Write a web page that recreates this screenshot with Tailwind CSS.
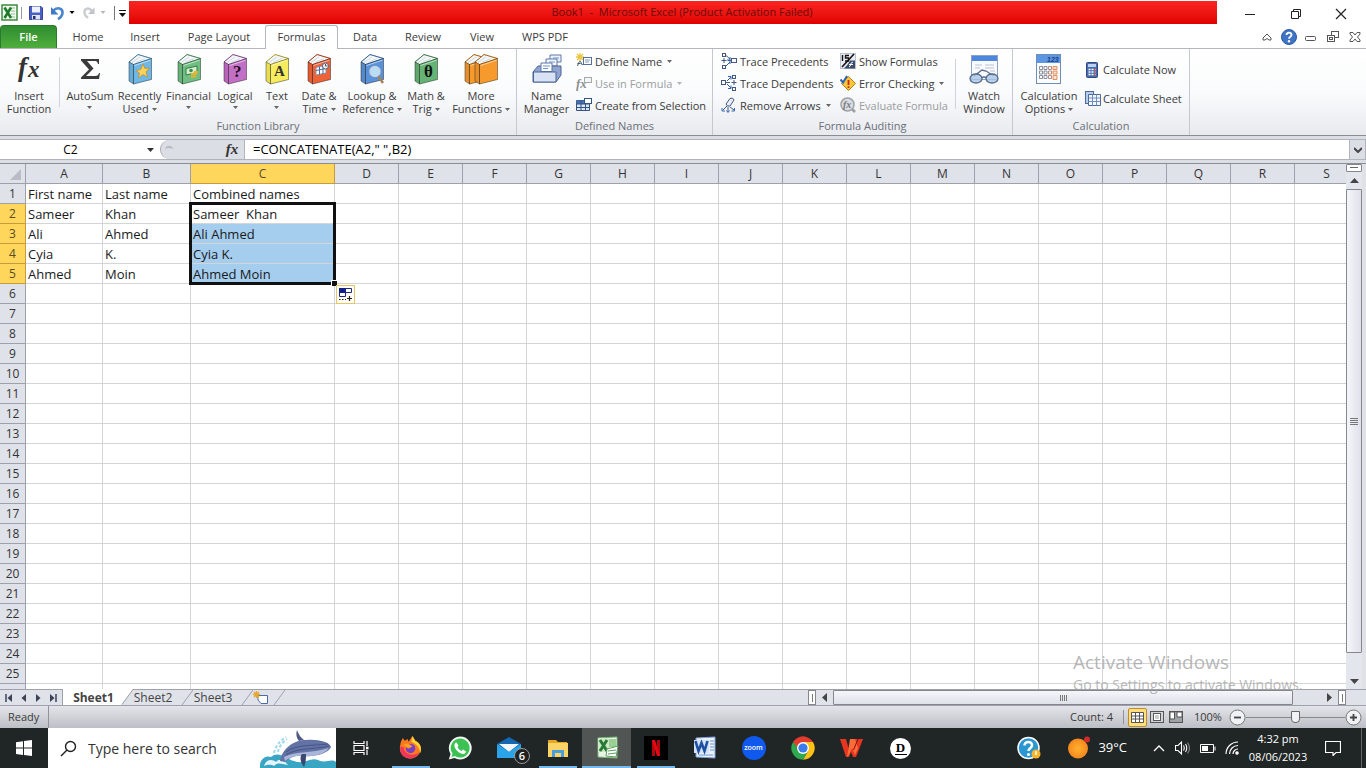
<!DOCTYPE html>
<html lang="en">
<head>
<meta charset="utf-8">
<title>Book1 - Microsoft Excel</title>
<script src="https://cdn.jsdelivr.net/npm/@tailwindcss/browser@4"></script>
</head>
<body class="relative flex h-screen flex-col overflow-hidden bg-white font-['Open_Sans','Noto_Sans',sans-serif] text-[11px] text-[#3b3b3b]">

<svg class="hidden">
  <symbol id="book" viewBox="0 0 32 32">
    <path d="M5 9L14 1.500L27.500 5.500L9.500 11.500Z" fill="#f4f7fa" stroke="currentColor" stroke-width="1"/>
    <path d="M5 9L14 1.500L27.500 5.500" fill="none" stroke="#0005" stroke-width="1"/>
    <path d="M8 9.500L16 4M12 9.500L21 5.500" stroke="#c9d1d8" stroke-width=".8" fill="none"/>
    <path d="M9.500 11.500L27.500 5.500V26.500L9.500 31Z" fill="currentColor" stroke="#0006" stroke-width="1"/>
    <path d="M5 9L9.500 11.500V31L5 28Z" fill="currentColor" stroke="#0006" stroke-width="1"/>
    <path d="M5.500 10L9 12V30L5.500 27.500Z" fill="#0001"/>
    <path d="M10.500 12.500L26.500 7.200" stroke="#fff8" fill="none"/>
  </symbol>
  <symbol id="caret" viewBox="0 0 5 3"><path d="M0 0H5L2.500 3Z" fill="currentColor"/></symbol>
</svg>

<!-- Title bar -->
<header class="flex h-[25px] shrink-0 items-center">
  <div class="flex w-[129px] shrink-0 items-center">
    <svg class="ml-px h-[18px] w-[17px]" viewBox="0 0 17 18"><rect x="1" y="1" width="15" height="15" fill="#f3faf1" stroke="#3d8b3d" stroke-width="1.500"/><path d="M10 4h4M10 7h4M10 10h4M10 13h4" stroke="#8cc28c"/><path d="M3.500 3.500L10 14M10 3.500L3.500 14" stroke="#1f7a2b" stroke-width="2.600"/></svg>
    <span class="ml-[3px] h-3 w-px bg-[#9a9a9a]"></span>
    <button aria-label="Save" class="ml-[6px]"><svg class="size-4" viewBox="0 0 16 16"><path d="M1.500 1.500H13l1.500 1.500V14.500H1.500Z" fill="#4a5fc4" stroke="#33459c"/><rect x="4" y="1.500" width="8" height="6" fill="#eef1fb"/><rect x="4" y="10" width="8" height="4.500" fill="#dfe3ee"/><rect x="5" y="11" width="2.500" height="3" fill="#222e6e"/></svg></button>
    <button aria-label="Undo" class="ml-[6px]"><svg class="size-4" viewBox="0 0 16 16"><path d="M3 6C7 1.500 13 3 12.500 8C12.200 11 10 13 8 14" fill="none" stroke="#4a86cf" stroke-width="2.600"/><path d="M1 2V9.500H8.500Z" fill="#3f7ac6"/></svg></button>
    <svg class="ml-[3px] h-[3px] w-[6px] text-black"><use href="#caret"/></svg>
    <button aria-label="Redo" class="ml-[6px]"><svg class="size-4" viewBox="0 0 16 16"><path d="M11 6C8 2 3 3 3.500 8C4 11 6 12 7 13" fill="none" stroke="#c9ccd1" stroke-width="2.400"/><path d="M13.500 2.500V9H7Z" fill="#bfc3c9"/></svg></button>
    <svg class="ml-[3px] h-[3px] w-[6px] text-[#b9b9b9]"><use href="#caret"/></svg>
    <span class="ml-2 h-3.5 w-px bg-[#777]"></span>
    <button aria-label="Customize toolbar" class="ml-1"><svg class="h-2 w-[7px]" viewBox="0 0 7 8"><path d="M0 1.500H7" stroke="#111"/><path d="M0 4H7L3.500 8Z" fill="#111"/></svg></button>
  </div>
  <h1 class="flex h-[23px] flex-1 items-center justify-center whitespace-pre bg-linear-to-b from-[#fb2420] to-[#e00000] pl-[18px] text-[#6b0d0a]">Book1  -  Microsoft Excel (Product Activation Failed)</h1>
  <div class="flex w-[149px] shrink-0 justify-end pt-0.5 pr-[2px] text-[#222]">
    <button aria-label="Minimize" class="flex w-[46px] justify-center"><svg class="size-3" viewBox="0 0 12 12"><path d="M1 6.500H11" stroke="currentColor"/></svg></button>
    <button aria-label="Restore" class="flex w-[45px] justify-center"><svg class="size-3" viewBox="0 0 12 12" fill="none" stroke="currentColor"><path d="M1.500 3.500H8.500V10.500H1.500ZM3.500 3V1.500H10.500V8.500H9"/></svg></button>
    <button aria-label="Close" class="flex w-[46px] justify-center"><svg class="size-3" viewBox="0 0 12 12"><path d="M1 1L11 11M11 1L1 11" stroke="currentColor" stroke-width="1.200"/></svg></button>
  </div>
</header>

<!-- Ribbon tabs -->
<nav class="flex h-6 shrink-0 border-b border-[#b3b6ba]">
  <button class="mr-[2px] w-[57px] rounded-t-[4px] border border-b-0 border-[#2b7a2b] bg-linear-to-b from-[#2f8d31] to-[#4fae3c] font-semibold text-white">File</button>
  <button class="w-[58px] pt-px">Home</button>
  <button class="w-[56px] pt-px">Insert</button>
  <button class="w-[92px] pt-px">Page Layout</button>
  <button class="h-6 w-[73px] rounded-t-[3px] border border-b-0 border-[#b3b6ba] bg-white">Formulas</button>
  <button class="w-[54px] pt-px">Data</button>
  <button class="w-[62px] pt-px">Review</button>
  <button class="w-[56px] pt-px">View</button>
  <button class="w-[70px] pt-px">WPS PDF</button>
  <div class="ml-auto flex text-[#555]">
    <button aria-label="Collapse ribbon" class="flex w-[22px] items-center justify-center"><svg class="h-2 w-2.5" viewBox="0 0 10 8"><path d="M1 5L5 1L9 5V7H7L5 5.500L3 7H1Z" fill="#fff" stroke="currentColor"/></svg></button>
    <button aria-label="Help" class="flex w-[22px] items-center justify-center"><svg class="size-4" viewBox="0 0 16 16"><circle cx="8" cy="8" r="7.500" fill="#3f74c4" stroke="#2b5aa6"/><path d="M5.500 6C5.500 2.800 10.700 3 10.500 6C10.400 7.700 8 7.800 8 9.800" fill="none" stroke="#fff" stroke-width="1.800"/><circle cx="8" cy="12.200" r="1.200" fill="#fff"/></svg></button>
    <button aria-label="Minimize workbook" class="flex w-[22px] items-center justify-center"><svg class="h-3 w-3" viewBox="0 0 12 12"><rect x=".5" y="5.500" width="10" height="4" rx="1" fill="#fff" stroke="currentColor"/></svg></button>
    <button aria-label="Restore workbook" class="flex w-[22px] items-center justify-center"><svg class="h-3 w-3" viewBox="0 0 12 12" fill="#fff" stroke="currentColor"><rect x="4.500" y=".5" width="7" height="6"/><rect x=".5" y="4.500" width="7" height="6"/><rect x="2.500" y="6.500" width="3" height="2"/></svg></button>
    <button aria-label="Close workbook" class="flex w-[22px] items-center justify-center"><svg class="h-2.5 w-3" viewBox="0 0 12 10"><path d="M1 .5H4L6 3L8 .5H11V2L8.500 5L11 8V9.500H8L6 7L4 9.500H1V8L3.500 5L1 2Z" fill="#fff" stroke="currentColor"/></svg></button>
  </div>
</nav>

<!-- Ribbon -->
<section class="flex h-[87px] shrink-0 border-b border-[#8b8d94] bg-linear-to-b from-white via-[#fafbfc] to-[#e8eaee] leading-[13px]">
  <div class="flex w-[517px] shrink-0 flex-col border-r border-[#c5c8cd]">
    <div class="flex flex-1 items-start pt-1">
      <button class="flex w-[58px] flex-col items-center gap-1"><svg class="size-8" viewBox="0 0 32 32"><text x="5" y="23" font-family="Liberation Serif, serif" font-style="italic" font-weight="700" font-size="27" fill="#333">f</text><text x="15" y="24" font-family="Liberation Serif, serif" font-style="italic" font-weight="700" font-size="23" fill="#333">x</text></svg><span>Insert<br>Function</span></button>
      <span class="mt-1 mr-[5px] ml-px h-[50px] w-px bg-[#d0d3d8]"></span>
      <button class="flex w-[50px] flex-col items-center gap-1"><svg class="size-8" viewBox="0 0 32 32"><path d="M7 6H25V11H24C23.500 8.500 22.500 8 20 8H13L19.500 15.500L12 23H21C23.500 23 24.500 22 25 20H26L25 26H7V24.500L15 16.500L7 7.500Z" fill="#3a3a3a"/></svg><span class="flex flex-col items-center">AutoSum<svg class="mt-[4px] h-[3px] w-[5px] text-[#666]"><use href="#caret"/></svg></span></button>
      <button class="flex w-[49px] flex-col items-center gap-1"><svg class="size-8 text-[#6db8e6]" viewBox="0 0 32 32"><use href="#book"/><path d="M19 11L20.800 15.500L25.500 15L22 19L23.500 24L19 21.500L14.500 25L15.500 20L12 17.500L16.800 16.500Z" fill="#ffd25a" stroke="#c58a1e" stroke-width=".7"/></svg><span class="whitespace-nowrap">Recently<br>Used <svg class="mb-[2px] inline h-[3px] w-[5px] text-[#666]"><use href="#caret"/></svg></span></button>
      <button class="flex w-[49px] flex-col items-center gap-1"><svg class="size-8 text-[#6fbf82]" viewBox="0 0 32 32"><use href="#book"/><path d="M13 15.500L24 13V19.500L13 22Z" fill="#d5efd0" stroke="#2f7a45"/><circle cx="18" cy="17.500" r="1.800" fill="#398a4d"/><path d="M18 21h6M18 23.500h5M21 19h4" stroke="#e5b52e" stroke-width="2"/></svg><span class="flex flex-col items-center">Financial<svg class="mt-[4px] h-[3px] w-[5px] text-[#666]"><use href="#caret"/></svg></span></button>
      <button class="flex w-[44px] flex-col items-center gap-1"><svg class="size-8 text-[#c46fc6]" viewBox="0 0 32 32"><use href="#book"/><text x="14" y="24" font-family="Liberation Serif, serif" font-weight="700" font-size="17" fill="#1c0f20">?</text></svg><span class="flex flex-col items-center">Logical<svg class="mt-[4px] h-[3px] w-[5px] text-[#666]"><use href="#caret"/></svg></span></button>
      <button class="flex w-[40px] flex-col items-center gap-1"><svg class="size-8 text-[#f7ec5c]" viewBox="0 0 32 32"><use href="#book"/><text x="13" y="23" font-family="Liberation Serif, serif" font-weight="700" font-size="15" fill="#333">A</text></svg><span class="flex flex-col items-center">Text<svg class="mt-[4px] h-[3px] w-[5px] text-[#666]"><use href="#caret"/></svg></span></button>
      <button class="flex w-[44px] flex-col items-center gap-1"><svg class="size-8 text-[#ee6238]" viewBox="0 0 32 32"><use href="#book"/><path d="M13 14.500L23 12V20L13 22Z" fill="#fff" stroke="#8794a8"/><path d="M13 17.500l10-2M16.500 13.500v8M20 13v8" stroke="#4d6aa0"/><circle cx="22.500" cy="13" r="3" fill="#eef2f8" stroke="#56657d"/><path d="M22.500 11v2h2" stroke="#333" fill="none" stroke-width=".8"/></svg><span class="whitespace-nowrap">Date &amp;<br>Time <svg class="mb-[2px] inline h-[3px] w-[5px] text-[#666]"><use href="#caret"/></svg></span></button>
      <button class="flex w-[62px] flex-col items-center gap-1"><svg class="size-8 text-[#5a92d8]" viewBox="0 0 32 32"><use href="#book"/><path d="M22 23L27 30" stroke="#a1825c" stroke-width="2.500"/><circle cx="19" cy="18.500" r="5" fill="#b9dcf7" stroke="#c9d3df" stroke-width="1.500"/></svg><span class="whitespace-nowrap">Lookup &amp;<br>Reference <svg class="mb-[2px] inline h-[3px] w-[5px] text-[#666]"><use href="#caret"/></svg></span></button>
      <button class="flex w-[46px] flex-col items-center gap-1"><svg class="size-8 text-[#65b476]" viewBox="0 0 32 32"><use href="#book"/><text x="14" y="24" font-family="Liberation Serif, serif" font-weight="700" font-size="17" fill="#111">θ</text></svg><span class="whitespace-nowrap">Math &amp;<br>Trig <svg class="mb-[2px] inline h-[3px] w-[5px] text-[#666]"><use href="#caret"/></svg></span></button>
      <button class="flex w-[64px] flex-col items-center gap-1"><svg class="h-8 w-9 text-[#f79a2e]" viewBox="0 0 36 32"><use href="#book" x="-3" width="32" height="32"/><use href="#book" x="7" width="32" height="32"/></svg><span class="whitespace-nowrap">More<br>Functions <svg class="mb-[2px] inline h-[3px] w-[5px] text-[#666]"><use href="#caret"/></svg></span></button>
    </div>
    <p class="h-4 text-center text-[#6b7078]">Function Library</p>
  </div>

  <div class="flex w-[196px] shrink-0 flex-col border-r border-[#c5c8cd]">
    <div class="flex flex-1 items-start">
      <button class="flex w-[59px] flex-col items-center gap-1 pt-1"><svg class="size-8" viewBox="0 0 32 32"><path d="M19 2H30V9H19Z" fill="#eef3fb" stroke="#5c77a6"/><path d="M15 6H26V13H15Z" fill="#f5f8fd" stroke="#5c77a6"/><path d="M2 19L7 13H30V22L25 29H2Z" fill="#8fa5d0" stroke="#4c6494"/><path d="M10 10H21V18.500H10Z" fill="#fff" stroke="#5c77a6"/><path d="M12 13h7M12 15.500h5M18 9h6M22 5h6" stroke="#6d92cc"/><path d="M2.500 19H25V29H2.500Z" fill="#d8e2f4" stroke="#4c6494"/></svg><span>Name<br>Manager</span></button>
      <div class="flex flex-col pt-px">
        <button class="flex h-[22px] items-center gap-[3px]"><svg class="size-4" viewBox="0 0 16 16"><path d="M1 1L7 7M7 1L1 7M4 0V8M0 4H8" stroke="#f0c53c" stroke-width="1.300"/><path d="M1.500 13c2-6 3-6 4-2q1 2 2 0M1.500 10.500h3" stroke="#456" fill="none"/><rect x="7.500" y="4.500" width="8" height="7" fill="#fff" stroke="#51719f"/><path d="M9 7h5M9 9h4" stroke="#7c9acb"/></svg>Define Name<svg class="ml-[2px] h-[3px] w-[5px] text-[#666]"><use href="#caret"/></svg></button>
        <button disabled class="flex h-[22px] items-center gap-[3px] text-[#9a9da1]"><svg class="size-4" viewBox="0 0 16 16"><text x="0" y="13" font-family="Liberation Serif, serif" font-style="italic" font-weight="700" font-size="13" fill="#8c8f94">fx</text><rect x="8.500" y="2.500" width="7" height="5" fill="#f5f5f5" stroke="#a5a8ad"/></svg>Use in Formula<svg class="ml-[2px] h-[3px] w-[5px] text-[#b5b5b5]"><use href="#caret"/></svg></button>
        <button class="flex h-[22px] items-center gap-[3px] whitespace-nowrap"><svg class="size-4" viewBox="0 0 16 16"><path d="M.5 3.500H13.500V13.500H.5Z" fill="#dbe7f8" stroke="#35527f"/><path d="M.5 3.500H8V7H.5Z" fill="#4574b5"/><path d="M.5 7h13M.5 10.500h13M5 3.500v10M9.500 3.500v10" stroke="#35527f"/><rect x="8.500" y="1.500" width="7" height="5" fill="#fff" stroke="#35527f"/></svg>Create from Selection</button>
      </div>
    </div>
    <p class="h-4 text-center text-[#6b7078]">Defined Names</p>
  </div>

  <div class="flex w-[300px] shrink-0 flex-col border-r border-[#c5c8cd]">
    <div class="flex flex-1 items-start">
      <div class="flex w-[119px] flex-col pt-px pl-2">
        <button class="flex h-[22px] items-center gap-[3px] whitespace-nowrap"><svg class="size-4 shrink-0" viewBox="0 0 16 16" fill="none" stroke="#44597c"><rect x="1.500" y=".5" width="3" height="3"/><path d="M3 5v5M.5 7.500h5"/><rect x="1.500" y="12.500" width="3" height="3"/><path d="M5 2.500L9 6M5 13l4-4M7 7.500h3"/><path d="M9 4v3H6M9 11V8" stroke="#2c64b8"/><rect x="10.500" y="5.500" width="5" height="4"/></svg>Trace Precedents</button>
        <button class="flex h-[22px] items-center gap-[3px] whitespace-nowrap"><svg class="size-4 shrink-0" viewBox="0 0 16 16" fill="none" stroke="#44597c"><rect x=".5" y="5.500" width="4" height="4"/><path d="M5 7.500h4M6 6L10 2M6 9l4 4"/><path d="M7 1.500h3v3M7 13.500h3v-3" stroke="#2c64b8"/><rect x="11.500" y=".5" width="3" height="3"/><path d="M13 5v5M10.500 7.500h5"/><rect x="11.500" y="12.500" width="3" height="3"/></svg>Trace Dependents</button>
        <button class="flex h-[22px] items-center gap-[3px] whitespace-nowrap"><svg class="size-4 shrink-0" viewBox="0 0 16 16" fill="none" stroke="#44597c"><path d="M5 7L9 1.500Q12 0 13 3L9 9Q6 10 5 7Z" fill="#e6edf8"/><path d="M6 9L2 13M7 10v5M9 10l4 3"/><path d="M1 11v3h3M5.500 13.500L7 15.500L8.500 13.500M13.500 11v3h-3" stroke="#2c64b8"/></svg>Remove Arrows<svg class="ml-[2px] h-[3px] w-[5px] shrink-0 text-[#666]"><use href="#caret"/></svg></button>
      </div>
      <div class="flex w-[124px] flex-col pt-px pl-2">
        <button class="flex h-[22px] items-center gap-[3px] whitespace-nowrap"><svg class="size-4 shrink-0" viewBox="0 0 16 16"><rect x=".5" y=".5" width="15" height="15" fill="#e9edf3" stroke="#bcc3cd"/><path d="M2.500 2V8M5 2.500H9M5.500 2.500V5H8.500V8H5" fill="none" stroke="#111" stroke-width="1.400"/><path d="M14 1L2 14" stroke="#111" stroke-width="1.600"/><path d="M10 7.500H15V15.500H4L8 11Z" fill="#3a4d6c"/><path d="M9 14c2 0 1-5 4-5M9 11.500h4" stroke="#fff" fill="none"/></svg>Show Formulas</button>
        <button class="flex h-[22px] items-center gap-[3px] whitespace-nowrap"><svg class="size-4 shrink-0" viewBox="0 0 16 16"><path d="M8.500 1.500L15.500 8.500L8.500 15.500L1.500 8.500Z" fill="#fcc63a" stroke="#b9821b"/><path d="M8.500 5V10M8.500 11.200V13" stroke="#c22a12" stroke-width="1.800"/><path d="M.5 4.500L3 7.500L7 1" fill="none" stroke="#2e63b4" stroke-width="2"/></svg>Error Checking<svg class="ml-[2px] h-[3px] w-[5px] shrink-0 text-[#666]"><use href="#caret"/></svg></button>
        <button disabled class="flex h-[22px] items-center gap-[3px] whitespace-nowrap text-[#9a9da1]"><svg class="size-4 shrink-0" viewBox="0 0 16 16"><path d="M11 11L15 15" stroke="#9a9da1" stroke-width="2.500"/><circle cx="7.500" cy="7.500" r="6.500" fill="#dcdde0" stroke="#9fa2a7" stroke-width="1.500"/><text x="3" y="11" font-family="Liberation Serif, serif" font-style="italic" font-weight="700" font-size="10" fill="#76797e">fx</text></svg>Evaluate Formula</button>
      </div>
      <span class="mt-[10px] -ml-px h-[50px] w-px bg-[#d0d3d8]"></span>
      <button class="flex w-[56px] flex-col items-center gap-1 pt-1"><svg class="size-8" viewBox="0 0 32 32"><rect x="3.500" y="2.500" width="26" height="24" fill="#f8fafd" stroke="#8da2c3"/><rect x="4" y="3" width="25" height="5" fill="#4f86dd"/><path d="M7 12h7M17 12h9M7 15h5M17 15h9M22 18h5" stroke="#b9c4d4"/><path d="M6 23L14 17L18 18L26 23" fill="none" stroke="#5a6c86" stroke-width="1.300"/><ellipse cx="8" cy="25.500" rx="6" ry="4.500" fill="#a9c4e6cc" stroke="#566b88" stroke-width="1.300"/><ellipse cx="24" cy="25.500" rx="6" ry="4.500" fill="#a9c4e6cc" stroke="#566b88" stroke-width="1.300"/><path d="M13.500 25q2.500-2 5 0" fill="none" stroke="#566b88" stroke-width="1.300"/></svg><span>Watch<br>Window</span></button>
    </div>
    <p class="h-4 text-center text-[#6b7078]">Formula Auditing</p>
  </div>

  <div class="flex w-[177px] shrink-0 flex-col border-r border-[#c5c8cd]">
    <div class="flex flex-1 items-start">
      <button class="flex w-[72px] flex-col items-center gap-1 pt-1"><svg class="size-8" viewBox="0 0 32 32"><rect x="3.500" y="1.500" width="24" height="29" fill="#fdfdfe" stroke="#6f8db9"/><rect x="4" y="2" width="23" height="8" fill="#5b97e2"/><text x="14" y="9" font-family="Liberation Sans, sans-serif" font-weight="700" font-style="italic" font-size="7" fill="#1c3f83">123</text><g fill="#fff" stroke-width=".8"><path d="M6.500 13.500h3v3h-3ZM11 13.500h3v3h-3ZM6.500 18h3v3h-3ZM11 18h3v3h-3ZM6.500 22.500h3v3h-3ZM11 22.500h3v3h-3Z" stroke="#6b7483"/><path d="M15.500 13.500h3v3h-3ZM15.500 18h3v3h-3ZM15.500 22.500h3v3h-3Z" stroke="#a5756a"/><path d="M20 13.500h4v3h-4ZM20 18h4v3h-4ZM20 22.500h4v4h-4Z" fill="#fbe3cf" stroke="#dc7a43"/></g></svg><span class="whitespace-nowrap">Calculation<br>Options <svg class="mb-[2px] inline h-[3px] w-[5px] text-[#666]"><use href="#caret"/></svg></span></button>
      <div class="flex flex-col pt-[6px]">
        <button class="flex h-[29px] items-center gap-[2px] whitespace-nowrap"><svg class="size-4" viewBox="0 0 16 16"><rect x="1.500" y=".5" width="11" height="15" rx="1" fill="#4a6cae" stroke="#2f4a80"/><rect x="3" y="2" width="8" height="3" fill="#bcd4f4"/><path d="M3.500 7.500h2M6.500 7.500h2M3.500 10h2M6.500 10h2M3.500 12.500h2M6.500 12.500h2" stroke="#fff" stroke-width="1.400"/><path d="M9.500 7.500H11M9.500 10H11M9.500 12.500H11" stroke="#ff7b62" stroke-width="1.400"/></svg>Calculate Now</button>
        <button class="flex h-[29px] items-center gap-[2px] whitespace-nowrap"><svg class="size-4" viewBox="0 0 16 16"><rect x=".5" y=".5" width="8" height="12" fill="#b9cdee" stroke="#4d699b"/><path d="M3.500 3.500H15.500V14.500H3.500Z" fill="#f2f7fe" stroke="#4d699b"/><path d="M3.500 7h12M3.500 10.500h12M7.500 3.500v11M11.500 3.500v11" stroke="#6f8dbf"/></svg>Calculate Sheet</button>
      </div>
    </div>
    <p class="h-4 text-center text-[#6b7078]">Calculation</p>
  </div>
</section>

<!-- Formula bar -->
<section class="flex h-[28px] shrink-0 border-b border-[#8b8d94] bg-[#dcdee5] pt-[3px] pb-[3px]">
  <div class="flex w-[245px] shrink-0 border-y border-[#b1b4bb]">
    <input aria-label="Name box" value="C2" class="w-[141px] bg-white text-center text-[12px] text-black outline-none">
    <button aria-label="Name list" class="flex w-[19px] items-center justify-center bg-white text-[#333]"><svg class="h-1 w-[7px]" viewBox="0 0 7 4"><path d="M0 0H7L3.500 4Z" fill="currentColor"/></svg></button>
    <span class="flex flex-1 bg-white"><span class="flex flex-1 items-center rounded-l-full border-l border-[#a5a8af] bg-[#dcdee5]"><span class="ml-1 size-2 rounded-full border-t-2 border-[#b5b8be]"></span></span></span>
    <button aria-label="Insert function" class="w-[25px] border-r border-[#b1b4bb] bg-[#dcdee5] font-['Liberation_Serif',serif] text-[15px] leading-none font-bold italic text-[#333]">fx</button>
  </div>
  <input aria-label="Formula" value="=CONCATENATE(A2,&quot; &quot;,B2)" class="min-w-0 flex-1 border-y border-[#b1b4bb] bg-white pl-2 text-[13px] text-black outline-none">
  <button aria-label="Expand formula bar" class="flex w-[17px] items-center justify-center border border-[#b1b4bb]"><svg class="h-1.5 w-2" viewBox="0 0 8 6"><path d="M0 1L4 5L8 1" fill="none" stroke="#444" stroke-width="2"/></svg></button>
</section>

<!-- Worksheet -->
<main class="flex min-h-0 flex-1">
  <div class="min-w-0 flex-1 overflow-hidden">
    <table class="w-[1359px] table-fixed border-separate border-spacing-0 text-[13px] text-[#1a1a1a]">
      <thead><tr id="cols"></tr></thead>
      <tbody id="rows"></tbody>
    </table>
  </div>
  <div class="flex w-5 shrink-0 flex-col border-r-4 border-[#dfe1e7] bg-[#e4e6ee]">
    <div class="flex h-2 justify-center rounded-[1px] border border-[#85878e] bg-white pt-[2px]"><span class="h-px w-2 bg-[#666]"></span></div>
    <button aria-label="Scroll up" class="flex h-[17px] items-center justify-center"><svg class="h-[5px] w-[9px]" viewBox="0 0 9 5"><path d="M0 5H9L4.500 0Z" fill="#444"/></svg></button>
    <div class="flex flex-1 flex-col">
      <div class="flex grow-[464] basis-0 flex-col items-center justify-center gap-px rounded-[1px] border border-[#85878e] bg-linear-to-r from-[#f5f6fa] to-[#dfe1ea]"><span class="h-px w-2 bg-[#777]"></span><span class="h-px w-2 bg-[#777]"></span><span class="h-px w-2 bg-[#777]"></span><span class="h-px w-2 bg-[#777]"></span></div>
      <div class="grow-[20] basis-0"></div>
    </div>
    <button aria-label="Scroll down" class="flex h-4 items-center justify-center"><svg class="h-[5px] w-[9px]" viewBox="0 0 9 5"><path d="M0 0H9L4.500 5Z" fill="#444"/></svg></button>
  </div>
</main>

<!-- Sheet tabs and horizontal scroll bar -->
<section class="flex h-[17px] shrink-0 border-y border-[#9ea1aa] bg-[#e0e2ea] text-[12px] text-[#444]">
  <div class="flex w-[63px] shrink-0 items-center justify-around border-r border-[#9ea1aa] px-0.5 text-[#3c4257]">
    <button aria-label="First sheet"><svg class="h-2 w-2" viewBox="0 0 8 8"><path d="M1 0V8" stroke="currentColor" stroke-width="1.500"/><path d="M7 0V8L2.500 4Z" fill="currentColor"/></svg></button>
    <button aria-label="Previous sheet"><svg class="h-2 w-2" viewBox="0 0 8 8"><path d="M6 0V8L1.500 4Z" fill="currentColor"/></svg></button>
    <button aria-label="Next sheet"><svg class="h-2 w-2" viewBox="0 0 8 8"><path d="M2 0V8L6.500 4Z" fill="currentColor"/></svg></button>
    <button aria-label="Last sheet"><svg class="h-2 w-2" viewBox="0 0 8 8"><path d="M7 0V8" stroke="currentColor" stroke-width="1.500"/><path d="M1 0V8L5.500 4Z" fill="currentColor"/></svg></button>
  </div>
  <button class="-mt-px w-[58px] bg-white pl-[3px] text-center leading-[17px] font-bold">Sheet1</button>
  <svg class="-mt-px h-4 w-3 shrink-0" viewBox="0 0 12 16"><path d="M0 0H12L0 16Z" fill="#fff"/><path d="M12 .5L1 15.500" stroke="#9ea1aa"/></svg>
  <button class="w-[40px] leading-[15px]">Sheet2</button>
  <svg class="ml-2 h-[15px] w-3 shrink-0" viewBox="0 0 12 15"><path d="M12 0L1 15" stroke="#9ea1aa"/></svg>
  <button class="w-[40px] leading-[15px]">Sheet3</button>
  <svg class="ml-2 h-[15px] w-3 shrink-0" viewBox="0 0 12 15"><path d="M12 0L1 15" stroke="#9ea1aa"/></svg>
  <button aria-label="Insert sheet"><svg class="h-3.5 w-4" viewBox="0 0 16 14"><path d="M5 4.500H14.500V12.500H8L5 9Z" fill="#fff" stroke="#4c6aa8"/><path d="M1 1L6 6M6 1L1 6M3.500 0V7M0 3.500H7" stroke="#e9a62a" stroke-width="1.300"/></svg></button>
  <svg class="ml-1 h-[15px] w-3 shrink-0" viewBox="0 0 12 15"><path d="M12 0L1 15" stroke="#9ea1aa"/></svg>
  <div class="ml-auto flex w-[558px] shrink-0">
    <span class="flex w-2 items-center justify-center border border-[#85878e] bg-white"><span class="h-2 w-px bg-[#777]"></span></span>
    <button aria-label="Scroll left" class="flex w-[17px] items-center justify-center"><svg class="h-[9px] w-[5px]" viewBox="0 0 5 9"><path d="M5 0V9L0 4.500Z" fill="#444"/></svg></button>
    <span class="flex w-[460px] items-center justify-center gap-px rounded-[1px] border border-[#85878e] bg-linear-to-b from-[#f5f6fa] to-[#dfe1ea]"><span class="h-1.5 w-px bg-[#777]"></span><span class="h-1.5 w-px bg-[#777]"></span><span class="h-1.5 w-px bg-[#777]"></span><span class="h-1.5 w-px bg-[#777]"></span></span>
    <button aria-label="Scroll right" class="ml-auto flex w-[18px] items-center justify-center"><svg class="h-[9px] w-[5px]" viewBox="0 0 5 9"><path d="M0 0V9L5 4.500Z" fill="#444"/></svg></button>
    <span class="flex w-2 items-center justify-center border border-[#85878e] bg-white"><span class="h-2 w-px bg-[#777]"></span></span>
    <span class="w-5"></span>
  </div>
</section>

<!-- Status bar -->
<footer class="flex h-[22px] shrink-0 items-center bg-linear-to-b from-[#e4e5ea] to-[#bcbfc5]">
  <span class="w-[48px] pl-2">Ready</span>
  <span class="h-full w-px bg-[#8f9298]"></span>
  <span class="ml-auto">Count: 4</span>
  <span class="mr-1 ml-[10px] h-3.5 w-px bg-[#8f9298]"></span>
  <button aria-label="Normal view" class="flex h-[19px] w-[19px] items-center justify-center rounded-[2px] border border-[#c28a30] bg-[#ffe07a]"><svg class="h-[11px] w-[13px]" viewBox="0 0 13 11"><path d="M.5.5H12.500V10.500H.5ZM.5 4H12.500M.5 7H12.500M4.500.5V10.500M8.500.5V10.500" fill="#fff" stroke="#555"/></svg></button>
  <button aria-label="Page layout view" class="ml-[2px]"><svg class="h-3 w-4" viewBox="0 0 16 12"><rect x="1.500" y=".5" width="13" height="11" fill="#d0d3d9" stroke="#555"/><rect x="4.500" y="2.500" width="7" height="7" fill="#fff" stroke="#555"/><path d="M6 5h4M6 7h4" stroke="#999"/></svg></button>
  <button aria-label="Page break view" class="ml-[3px]"><svg class="h-3 w-4" viewBox="0 0 16 12"><rect x="1.500" y=".5" width="13" height="11" fill="#9ea1a8" stroke="#555"/><path d="M2 1H6.500V8H2ZM9 1H14V6H9Z" fill="#fff" stroke="#555"/></svg></button>
  <span class="ml-[10px] w-[35px]">100%</span>
  <button aria-label="Zoom out"><svg class="size-[17px]" viewBox="0 0 17 17"><circle cx="8.500" cy="8.500" r="7.500" fill="#f1f2f5" stroke="#777"/><path d="M5 8.500H12" stroke="#444" stroke-width="1.800"/></svg></button>
  <input type="range" aria-label="Zoom" min="0" max="100" value="50" class="h-3 w-[99px] appearance-none bg-[linear-gradient(#85878e,#85878e)] bg-size-[100%_1px] bg-center bg-no-repeat [&::-webkit-slider-thumb]:h-3 [&::-webkit-slider-thumb]:w-[9px] [&::-webkit-slider-thumb]:appearance-none [&::-webkit-slider-thumb]:rounded-b-[4px] [&::-webkit-slider-thumb]:border [&::-webkit-slider-thumb]:border-[#666] [&::-webkit-slider-thumb]:bg-[#f1f2f5]">
  <button aria-label="Zoom in" class="mr-1"><svg class="size-[17px]" viewBox="0 0 17 17"><circle cx="8.500" cy="8.500" r="7.500" fill="#f1f2f5" stroke="#777"/><path d="M5 8.500H12M8.500 5V12" stroke="#444" stroke-width="1.800"/></svg></button>
</footer>

<!-- Taskbar -->
<nav class="flex h-10 shrink-0 bg-[#202625] text-white">
  <button aria-label="Start" class="flex w-12 items-center justify-center"><svg class="size-4" viewBox="0 0 16 16"><path d="M0 2.200L7 1.200V7.600H0ZM8 1L16 0V7.600H8ZM0 8.500H7V14.900L0 13.900ZM8 8.500H16V16L8 15Z" fill="#fff"/></svg></button>
  <label class="flex w-[288px] items-center bg-white text-[#333]">
    <svg class="ml-3 size-[17px] shrink-0" viewBox="0 0 17 17" fill="none" stroke="#222" stroke-width="1.400"><circle cx="10.500" cy="6.500" r="5"/><path d="M7 10L1 16"/></svg>
    <input type="search" aria-label="Search" placeholder="Type here to search" class="ml-[11px] w-[164px] text-[14px] outline-none placeholder:text-[#333]">
    <svg class="ml-auto h-10 w-[78px] shrink-0" viewBox="0 0 78 40"><path d="M2 40C1 31 8 27 13 29C20 22 29 31 36 33C46 37 52 29 60 32C68 36 73 30 78 34V40Z" fill="#3aa6c4"/><path d="M6 38c2-7 8-7 12-4c3-4 9-1 12 3c-7-1-10-3-14 1c-4-2-7-1-10 0Z" fill="#e4f6fb"/><path d="M16 25c2-8 6-12 12-16M20 24c1-6 5-10 9-13" stroke="#9fd7ee" stroke-width="2" stroke-dasharray="3 2" fill="none"/><path d="M41 13C38 9 38 6 39 2C41 7 43 10 46 12Z" fill="#4f5a86"/><path d="M22 33C24 22 34 12 48 12C60 11 72 14 73 19C70 26 56 29 44 28C36 27 31 31 27 34Z" fill="#6272a4"/><path d="M26 29C38 23 56 25 71 20C66 27 54 29 44 28C36 27 30 31 27 33Z" fill="#a9b6da"/><path d="M28 27C40 19 56 22 71 18M28 24C38 16 55 18 70 16" stroke="#404d7c" stroke-width=".8" fill="none"/><path d="M44 26C41 30 43 35 46 39C48 34 48 30 48 26Z" fill="#3c4871"/></svg>
  </label>
  <button aria-label="Task view" class="flex w-[50px] items-center justify-center"><svg class="size-4" viewBox="0 0 16 16" fill="none" stroke="#fff" stroke-width="1.200"><path d="M1 1V3.500H11V1M1 15V12.500H11V15M1 5.500H11V10.500H1ZM14 1V6M14 10V15"/><path d="M13 8H15.500" stroke-width="2.500"/></svg></button>
  <button aria-label="Firefox" class="flex w-[49px] flex-col items-center"><svg class="mt-2 size-[23px]" viewBox="0 0 24 24"><path d="M2 6L4 2L6 5L9 3L10 6L14 0L17 5C22 7 24 12 22.500 16C20 22 15 24 11 23.500C5 23 0 18 1 11Z" fill="#ff7a1f"/><path d="M14 0L17 5C23 8 24 14 22 18C22 11 17 8 13 6Z" fill="#ffd43b"/><path d="M1.500 11C0 18 5 24 12 23.500C17 23 20 20 21 17C17 21 6 21 5 12Z" fill="#f0375a"/><circle cx="12" cy="13" r="5" fill="#7b3fc4"/><path d="M5 9C8 7 12 9 14 11L10 13L8 12Z" fill="#ff9f1f"/></svg><span class="mt-auto h-[2px] w-[38px] bg-[#76b9ed]"></span></button>
  <button aria-label="WhatsApp" class="flex w-[49px] items-center justify-center"><svg class="size-6" viewBox="0 0 24 24"><path d="M12 .5A11.500 11.500 0 1 1 6.500 22L.8 23.500L2.500 18A11.500 11.500 0 0 1 12 .5Z" fill="#f3f7f3"/><path d="M12 2.500A9.500 9.500 0 1 1 7 20L3.500 21L4.500 17.500A9.500 9.500 0 0 1 12 2.500Z" fill="#3cc253"/><path d="M8.500 6.500L10.500 9.500L9.500 11C10.500 13 11.500 14 13.500 15L15 13.500L18 15.500C17.500 18 15.500 18.500 13 17.500C9.500 16 7.500 13.500 6.500 10.500C6 8.500 7 6.500 8.500 6.500Z" fill="#fff"/></svg></button>
  <button aria-label="Mail, 6 unread" class="relative flex w-[49px] items-center justify-center"><svg class="size-6" viewBox="0 0 24 24"><path d="M0 8L12 1L24 8V22H0Z" fill="#1467b3"/><path d="M2 8H22L12 16Z" fill="#f1f7fc"/><path d="M0 8L12 16L24 8V22H0Z" fill="#2aa3e8"/></svg><span class="absolute right-[3px] bottom-1 flex size-4 items-center justify-center rounded-full border border-[#999] bg-[#222] text-[11px] font-semibold">6</span></button>
  <button aria-label="File Explorer" class="flex w-[49px] flex-col items-center"><svg class="mt-2 size-6" viewBox="0 0 24 24"><path d="M2 4H10L12 6H21V9H2Z" fill="#e5a823"/><path d="M2 7H22V21H2Z" fill="#fbd467"/><path d="M6 21V14H18V21H15V17H9V21Z" fill="#4a9fdb"/></svg><span class="mt-auto h-[2px] w-[38px] bg-[#76b9ed]"></span></button>
  <button aria-label="Excel" class="flex w-[49px] flex-col items-center bg-[#515655]"><svg class="mt-2 size-6" viewBox="0 0 24 24"><path d="M3 2L22 1V22L3 21Z" fill="#e9f4e6" stroke="#7cb67a"/><path d="M13 3H21V11H13Z" fill="#9bcf94"/><path d="M3 2H14V16H3Z" fill="#cfe8c9"/><path d="M5 4L12 15M12 4L5 15" stroke="#277c33" stroke-width="3"/><path d="M12 13L23 10L21 21L11 20Z" fill="#fff" stroke="#5a9b5a"/><path d="M13 15l8-1M13 18l8-1" stroke="#5a9b5a"/></svg><span class="mt-auto h-[2px] w-full bg-[#76b9ed]"></span></button>
  <button aria-label="Netflix" class="flex w-[49px] flex-col items-center"><svg class="mt-2 size-6" viewBox="0 0 24 24"><rect width="24" height="24" fill="#000"/><path d="M8 4H11V20H8ZM13 4H16V20H13Z" fill="#b20710"/><path d="M8 4H11L16 20H13Z" fill="#e50914"/></svg><span class="mt-auto h-[2px] w-[38px] bg-[#76b9ed]"></span></button>
  <button aria-label="Word" class="flex w-[49px] items-center justify-center"><svg class="size-6" viewBox="0 0 24 24"><path d="M3 2L22 1V22L3 21Z" fill="#eaf1fb" stroke="#7c9fd4"/><path d="M17 5h4M17 8h4M17 11h4M17 14h4M6 19h14" stroke="#6d93d0"/><path d="M1 4H16V17H1Z" fill="#d3e2f7"/><path d="M2.500 5L5.500 15L8.500 7L11.500 15L14.500 5" fill="none" stroke="#1f4fa3" stroke-width="2.600"/></svg></button>
  <button aria-label="Zoom meetings" class="flex w-[49px] items-center justify-center"><span class="flex size-6 items-center justify-center rounded-full bg-[#1059ee] text-[7px] font-semibold">zoom</span></button>
  <button aria-label="Chrome" class="flex w-[49px] items-center justify-center"><svg class="size-6" viewBox="0 0 24 24"><path d="M12 12L2 6A11.700 11.700 0 0 1 22 6H12Z" fill="#e33b2e"/><path d="M12 12L12 6H22A11.700 11.700 0 0 1 12 23.700L17 15Z" fill="#fbc116"/><path d="M12 12L17 15L12 23.700A11.700 11.700 0 0 1 2 6L7 15Z" fill="#2da94f"/><path d="M2 6L7 15L12 6Z" fill="#e33b2e"/><path d="M2 6L7.200 15L9 13Z" fill="#2da94f"/><circle cx="12" cy="12" r="6" fill="#fff"/><circle cx="12" cy="12" r="4.600" fill="#3b7bea"/></svg></button>
  <button aria-label="WPS Office" class="flex w-[49px] items-center justify-center"><svg class="size-6" viewBox="0 0 24 24"><path d="M0 3H6L9 14L12 7L10 3H23L16 21H13L11 16L9 21H6Z" fill="#e8351f"/><path d="M10 3H15L18 12L15 19L12 12L9 19L7 21Z" fill="#ff6a3a"/><path d="M18 3L13.500 14" stroke="#7c130a"/></svg></button>
  <button aria-label="Document app" class="flex w-[49px] items-center justify-center"><span class="flex size-[21px] flex-col items-center justify-center gap-px rounded-full bg-white font-['Liberation_Serif',serif] text-[13px] leading-[11px] font-bold text-black">D<span class="h-px w-3 bg-black"></span></span></button>
  <div class="ml-auto flex items-center">
    <button aria-label="Get help" class="mr-[26px]"><svg class="size-6" viewBox="0 0 24 24"><circle cx="11.500" cy="12" r="10.500" fill="#2a96d2" stroke="#fff" stroke-width="1.500"/><path d="M7.500 9.500C7.500 4.500 15.500 5 15 9.500C14.800 12 11.500 12 11.500 15" fill="none" stroke="#fff" stroke-width="2.600"/><circle cx="11.500" cy="18.500" r="1.600" fill="#fff"/><circle cx="19" cy="18" r="4.500" fill="#f6b52c"/><path d="M19 15v4" stroke="#fff" stroke-width="1.500"/></svg></button>
    <button class="mr-5 flex items-center gap-[7px] text-[13px]"><svg class="size-6" viewBox="0 0 24 24"><defs><radialGradient id="sun"><stop stop-color="#ffb02e"/><stop offset="1" stop-color="#f5881f"/></radialGradient></defs><circle cx="11" cy="12.500" r="10" fill="url(#sun)"/><circle cx="20" cy="3.500" r="3" fill="#d12b2b"/></svg>39°C</button>
    <button aria-label="Hidden icons" class="flex w-6 justify-center"><svg class="h-[7px] w-3" viewBox="0 0 12 7"><path d="M1 6L6 1L11 6" fill="none" stroke="#fff" stroke-width="1.300"/></svg></button>
    <button aria-label="Volume" class="flex w-6 justify-center"><svg class="size-4" viewBox="0 0 16 16" fill="none" stroke="#fff" stroke-width="1.100"><path d="M.5 5.500H3L6.500 2V14L3 10.500H.5ZM8.500 5.500Q10 8 8.500 10.500M10.500 4Q13 8 10.500 12"/><path d="M12.500 2.500Q16.500 8 12.500 13.500" stroke="#888"/></svg></button>
    <button aria-label="Battery" class="flex w-[25px] justify-center"><svg class="h-[9px] w-4" viewBox="0 0 16 9"><path d="M.5.5H13.500V8.500H.5ZM15 2.500V6.500" fill="none" stroke="#fff"/><rect x="2" y="2" width="6" height="5" fill="#fff"/></svg></button>
    <button aria-label="Wi-Fi" class="flex w-[24px] justify-center"><svg class="size-[14px]" viewBox="0 0 14 14" fill="none" stroke="#fff" stroke-width="1.200"><path d="M1 13A12 12 0 0 1 13 1M4.500 13A8.500 8.500 0 0 1 13 4.500M8 13A5 5 0 0 1 13 8"/><circle cx="12" cy="12" r="1.200" fill="#fff"/></svg></button>
    <button class="w-[68px] text-center text-[11px] leading-[18px]">4:32 pm<br>08/06/2023</button>
    <button aria-label="Notifications" class="flex w-[42px] justify-center"><svg class="size-4" viewBox="0 0 16 16"><path d="M.5 1.500H15.500V12.500H11L8 15.500V12.500H.5Z" fill="none" stroke="#fff" stroke-width="1.200"/></svg></button>
    <span class="mr-1 ml-[7px] h-10 w-px bg-[#666]"></span>
  </div>
</nav>

<!-- Activation watermark -->
<aside class="pointer-events-none absolute right-[57px] bottom-[73px] z-20 w-[236px] text-[#a5a5a5]/80">
  <p class="text-[19px] leading-6">Activate Windows</p>
  <p class="text-[14px] leading-[21px] whitespace-nowrap">Go to Settings to activate Windows.</p>
</aside>

<script>
const widths = [26, 77, 88, 144, ...Array(16).fill(64)];
const letters = 'ABCDEFGHIJKLMNOPQRS';
const data = [
  ['First name', 'Last name', 'Combined names'],
  ['Sameer', 'Khan', 'Sameer  Khan'],
  ['Ali', 'Ahmed', 'Ali Ahmed'],
  ['Cyia', 'K.', 'Cyia K.'],
  ['Ahmed', 'Moin', 'Ahmed Moin']
];
const head = 'h-5 border-r border-b p-0 pt-px text-[12px] leading-[18px] font-normal ';
const plain = 'border-[#9ea1aa] bg-[#e0e2ea] text-[#333]';
const picked = 'border-[#c79a3c] bg-[#ffd65c] text-[#5a4a20]';
const corner = '<svg class="ml-auto mr-1 size-[11px]" viewBox="0 0 11 11"><path d="M11 0V11H0Z" fill="#b9bcc6"/></svg>';
document.getElementById('cols').innerHTML = widths.map((w, i) =>
  `<th style="width:${w}px" class="${head}${i === 3 ? picked : plain}">${i ? letters[i - 1] : corner}</th>`).join('');
const selection = `<div class="pointer-events-none absolute -top-[2px] -left-[2px] z-10 h-[83px] w-[147px] border-[3px] border-[#111]">
  <span class="absolute -right-1 -bottom-1 size-[6px] border-t border-l border-white bg-[#111]"></span>
  <span class="absolute top-[80px] left-[144px] flex size-[19px] items-center justify-center border border-[#e2c66a] bg-[#fdfbf3]"><svg class="size-[15px]" viewBox="0 0 15 15"><path d="M1.500 1.500H13.500V5.500H1.500ZM1.500 5.500H7.500V9.500H1.500ZM7.500 1.500V5.500" fill="#fff" stroke="#1c2a86"/><rect x="1" y="1" width="6" height="5" fill="#10208a"/><path d="M1 12.500h1.500M4 12.500h1.500M7 12.500h1M9 11.500h5M11.500 9v5" stroke="#222" stroke-width="1.200"/></svg></span>
</div>`;
let html = '';
for (let r = 1; r <= 26; r++) {
  const on = r > 1 && r < 6;
  html += `<tr><th class="${head}${on ? picked : plain}">${r}</th>`;
  for (let c = 0; c < 19; c++) {
    const fill = c === 2 && r > 2 && r < 6 ? 'bg-[#a5cdee]' : '';
    html += `<td class="relative h-5 border-r border-b border-[#d4d5d8] p-0 pt-px pl-[2px] leading-[18px] whitespace-pre ${fill}">${(data[r - 1] || [])[c] || ''}${r === 2 && c === 2 ? selection : ''}</td>`;
  }
  html += '</tr>';
}
document.getElementById('rows').innerHTML = html;
</script>
</body>
</html>
